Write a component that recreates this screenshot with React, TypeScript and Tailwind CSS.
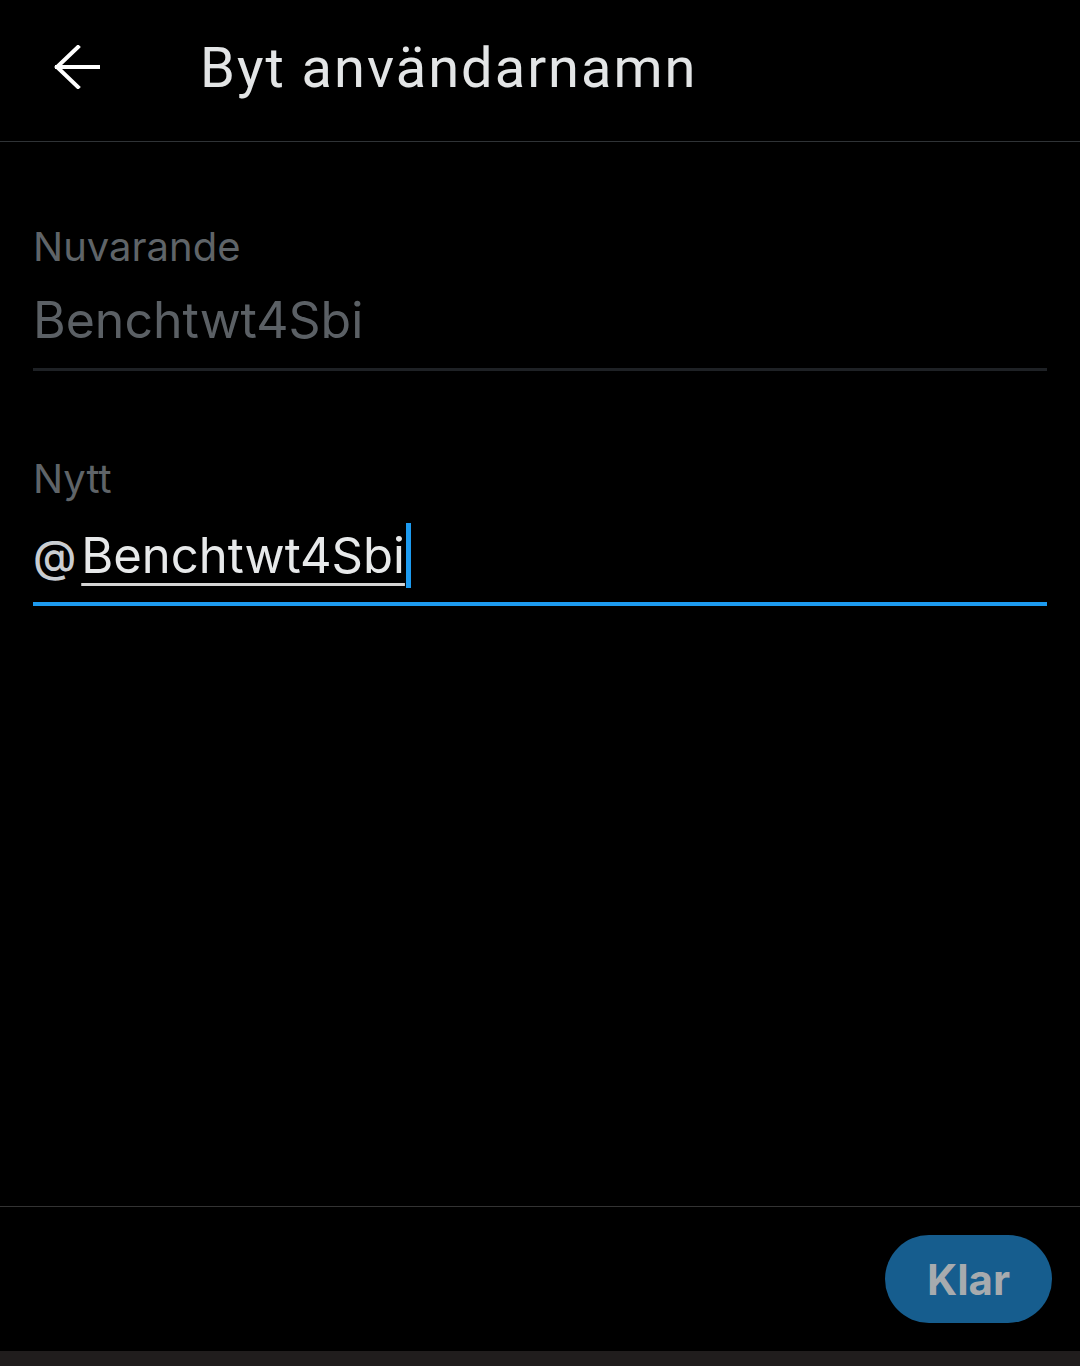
import React from "react";

const BackArrow = () => (
  <svg width="46" height="44" viewBox="0 0 46 44" fill="none">
    <path d="M44 22H3M24 2 3 22l21 20" stroke="#ffffff" strokeWidth="4" strokeLinecap="square" />
  </svg>
);

export default function App() {
  return (
    <div
      className="flex h-[1366px] w-full flex-col bg-black"
      style={{ fontFamily: "Inter, 'Noto Sans', sans-serif" }}
    >
      {/* Header */}
      <header className="flex h-[142px] shrink-0 items-start border-b border-[#2f3336]">
        <div className="ml-[54px] mt-[45px]">
          <BackArrow />
        </div>
        <h1
          className="ml-[100px] mt-[36px] text-[56px] font-normal leading-[64px] tracking-[2px] text-[#e3e5e6]"
          style={{ fontFamily: "Roboto, sans-serif" }}
        >
          Byt användarnamn
        </h1>
      </header>

      {/* Form */}
      <main className="flex-1 px-[33px] pt-[81px]">
        <label className="block text-[40px] leading-[48px] text-[#5f6468]">
          Nuvarande
        </label>
        <div className="mt-[20px] border-b-[3px] border-[#1e2125] pb-[19px]">
          <div className="text-[50px] leading-[58px] text-[#5b6065]">Benchtwt4Sbi</div>
        </div>

        <label className="mt-[84px] block text-[40px] leading-[48px] text-[#5f6468]">
          Nytt
        </label>
        <div className="mt-[20px] border-b-[4px] border-[#1d9bf0] pb-[14px]">
          <div className="flex items-center text-[49px] leading-[58px]">
            <span className="mr-[5px] text-[44px] font-medium text-[#c9cdd1]">@</span>
            <span className="text-[#e7e9ea] underline decoration-[#d4d4d4] decoration-[3px] underline-offset-[10px]">
              Benchtwt4Sbi
            </span>
            <span className="ml-[1px] inline-block h-[65px] w-[5px] bg-[#1d9bf0]" />
          </div>
        </div>
      </main>

      {/* Footer */}
      <footer className="flex h-[145px] shrink-0 items-center justify-end border-t border-[#333333] pr-[28px]">
        <button className="flex h-[88px] w-[167px] items-center justify-center rounded-full bg-[#165d8e] text-[42px] font-bold text-[#a7abae]">
          Klar
        </button>
      </footer>

      <div className="h-[15px] shrink-0 bg-[#201d1d]" />
    </div>
  );
}
